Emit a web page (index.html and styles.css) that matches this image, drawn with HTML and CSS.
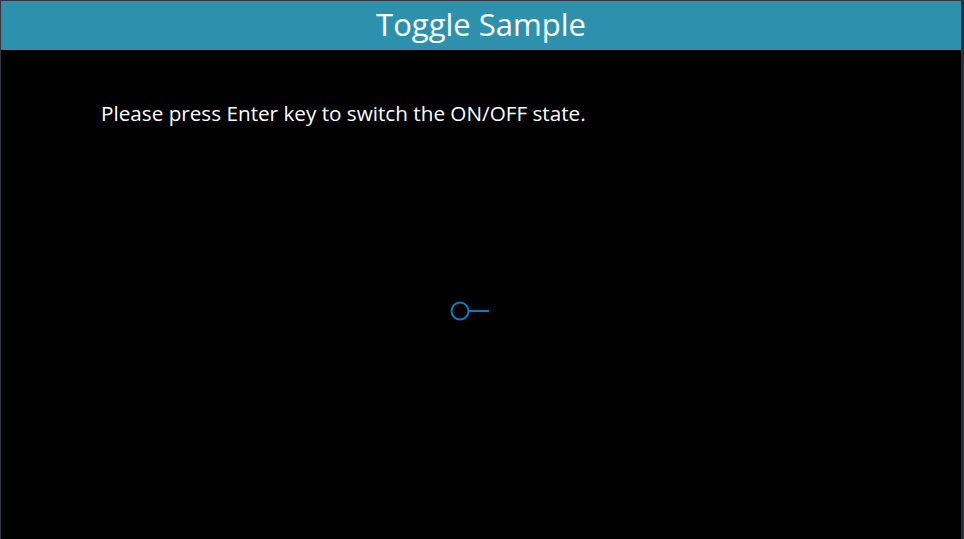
FILE: index.html
```html
<!DOCTYPE html>
<html>
<head>
<meta charset="utf-8">
<link rel="stylesheet" href="styles.css">
</head>
<body>
<div class="frame">
  <header class="title-bar"><h1 class="title">Toggle Sample</h1></header>
  <main class="content">
    <p class="hint">Please press Enter key to switch the ON/OFF state.</p>
    <div class="toggle-area">
      <svg class="toggle" width="44" height="24" viewBox="0 0 44 24">
        <circle cx="12" cy="12" r="8.5" fill="none" stroke="#0a7ac2" stroke-width="2"/>
        <line x1="20.5" y1="12" x2="41" y2="12" stroke="#0a7ac2" stroke-width="2"/>
      </svg>
    </div>
  </main>
</div>
</body>
</html>
```

FILE: styles.css
```css
html, body {
  margin: 0;
  padding: 0;
  background: #000;
  height: 100%;
}
.frame {
  box-sizing: border-box;
  height: 539px;
  width: 964px;
  border-top: 1px solid #31353f;
  border-left: 1px solid #31353f;
  border-right: 3px solid #2c2f38;
  display: flex;
  flex-direction: column;
  font-family: "Open Sans", "Noto Sans", sans-serif;
  color: #fff;
}
.title-bar {
  height: 49px;
  background: #2d91ae;
  display: flex;
  align-items: center;
  justify-content: center;
  flex-shrink: 0;
}
.title {
  margin: 0;
  font-weight: 400;
  font-size: 31px;
  line-height: 49px;
  padding-bottom: 2px;
}
.content {
  flex: 1;
  display: flex;
  flex-direction: column;
}
.hint {
  margin: 50px 0 0 100px;
  font-size: 20.7px;
  line-height: 26px;
}
.toggle-area {
  display: flex;
  justify-content: center;
  padding-top: 173px;
}
.toggle {
  display: block;
  margin-left: -22px;
}
```
